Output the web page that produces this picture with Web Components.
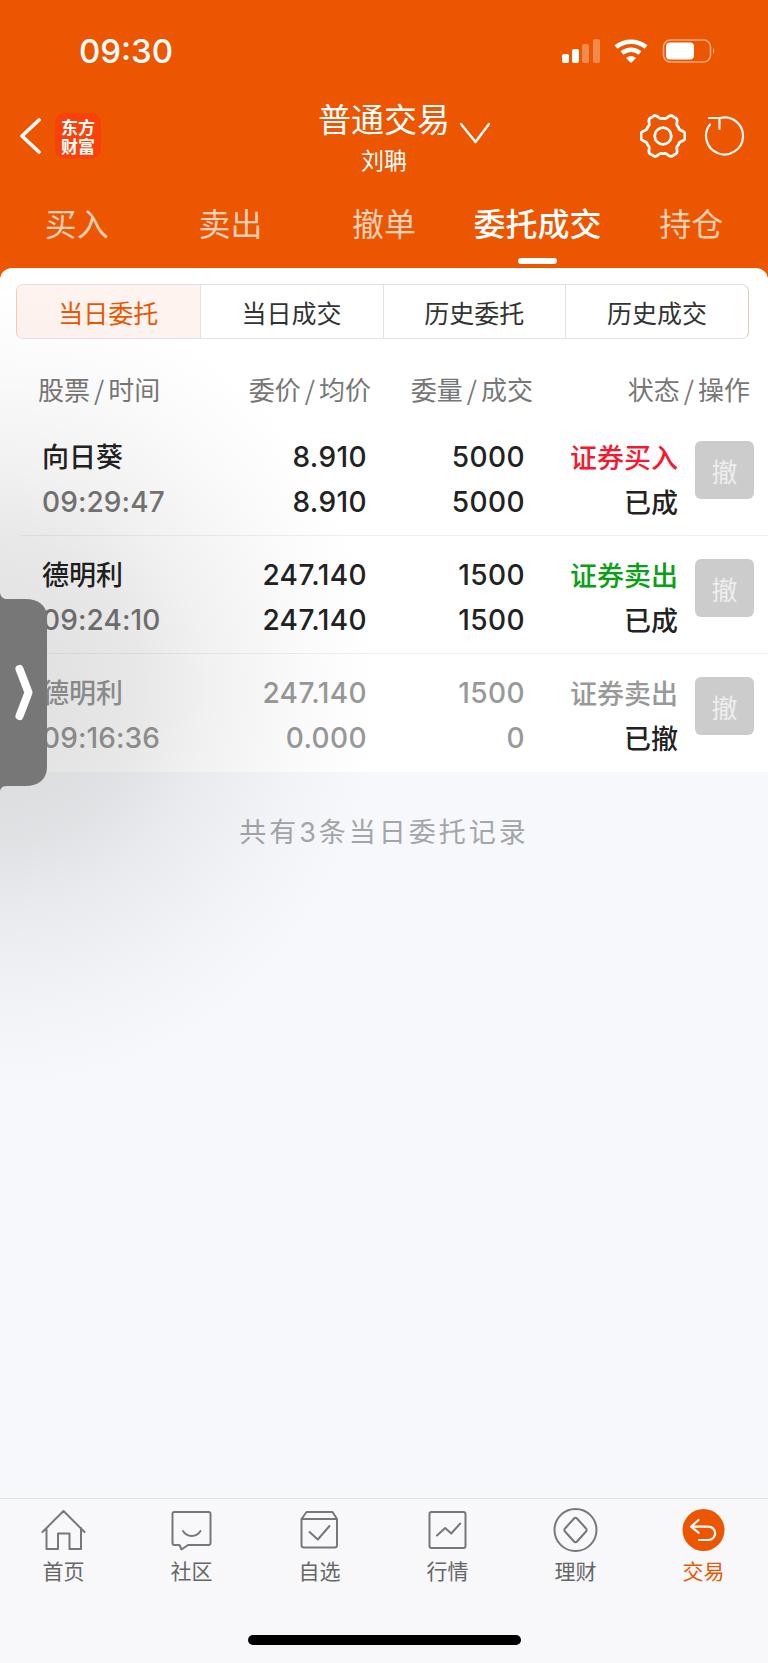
<!DOCTYPE html>
<html lang="zh">
<head>
<meta charset="utf-8">
<title>委托成交</title>
<style>
html, body { margin: 0; padding: 0; background: #f7f8fb; }
body { font-family: "Noto Sans CJK SC", "Noto Sans", sans-serif; }
#page { display: flex; flex-direction: column; width: 768px; height: 1663px; position: relative; overflow: hidden; }
</style>
</head>
<body>
<div id="page">
  <status-bar></status-bar>
  <trade-header title="普通交易" user="刘聃"></trade-header>
  <trade-tabs></trade-tabs>
  <orders-card></orders-card>
  <list-summary>共有3条当日委托记录</list-summary>
  <bottom-nav></bottom-nav>
  <side-handle></side-handle>
</div>

<script>
class StatusBar extends HTMLElement {
    constructor() {
        super();
        this.attachShadow({ mode: 'open' });
        this.shadowRoot.innerHTML = `
            <style>
                :host { display: flex; justify-content: space-between; align-items: center; height: 92px; box-sizing: border-box; background: #ec5600; color: #fff; padding: 10px 0 0 79px; }
                .time { font: 500 33px/1 Inter, "Liberation Sans", sans-serif; }
                svg { display: block; margin-right: 51px; }
            </style>
            <span class="time">09:30</span>
            <svg width="156" height="24" viewBox="0 0 156 24">
                <rect x="1" y="15" width="7" height="9" rx="2" fill="#fff"/>
                <rect x="11" y="10" width="7" height="14" rx="2" fill="#fff"/>
                <rect x="21" y="5" width="7" height="19" rx="2" fill="#fff" fill-opacity=".3"/>
                <rect x="32" y="0" width="7" height="24" rx="2" fill="#fff" fill-opacity=".3"/>
                <path d="M55 8a24 24 0 0 1 30 0" fill="none" stroke="#fff" stroke-width="4.500"/>
                <path d="M61 14a14 14 0 0 1 18 0" fill="none" stroke="#fff" stroke-width="4.500"/>
                <path d="M65 19a8 8 0 0 1 10 0L70 24z" fill="#fff"/>
                <rect x="102.500" y="1" width="47" height="22" rx="7" fill="none" stroke="#fff" stroke-opacity=".5" stroke-width="1.600"/>
                <rect x="105" y="3.500" width="28" height="17" rx="4" fill="#fff"/>
                <path d="M152 9a4 4 0 0 1 0 6z" fill="#fff" fill-opacity=".5"/>
            </svg>
        `;
    }
}

class TradeHeader extends HTMLElement {
    constructor() {
        super();
        this.attachShadow({ mode: 'open' });
        // six flat lobes: left, right and the four corners, notch at top and bottom
        let gear = '';
        for (let i = 0; i < 180; i++) {
            const t = i / 180 * Math.PI * 2;
            const r = 19.8 + 2.6 * (Math.cos(6 * t) - 0.2 * Math.cos(18 * t));
            gear += (i ? 'L' : 'M') + (23 + r * Math.cos(t)).toFixed(2) + ' ' + (23 + r * Math.sin(t)).toFixed(2);
        }
        this.shadowRoot.innerHTML = `
            <style>
                :host { display: grid; grid-template-columns: 1fr auto 1fr; height: 98px; background: #ec5600; color: #fff; }
                .left { display: flex; align-items: center; gap: 13px; padding: 0 0 10px 20px; }
                .logo { display: grid; place-content: center; width: 46px; height: 46px; border-radius: 10px; background: #f9420a; font-size: 17px; line-height: 19px; font-weight: 700; text-align: center; }
                .center { display: grid; justify-items: center; align-content: start; position: relative; padding-top: 4px; }
                .title { font-size: 33px; line-height: 44px; }
                .user { font-size: 23px; line-height: 30px; margin-top: 4px; }
                .drop { position: absolute; left: 141px; top: 30px; }
                .right { display: flex; justify-content: flex-end; align-items: center; gap: 17px; padding: 0 23px 10px 0; }
                svg { display: block; }
            </style>
            <div class="left">
                <svg width="22" height="36" viewBox="0 0 22 36"><path d="M19 2 2 18l17 16" fill="none" stroke="#fff" stroke-width="3.600" stroke-linecap="round" stroke-linejoin="round"/></svg>
                <div class="logo"><span>东方</span><span>财富</span></div>
            </div>
            <div class="center">
                <span class="title"></span>
                <span class="user"></span>
                <svg class="drop" width="32" height="22" viewBox="0 0 32 22"><path d="M2 2l14.500 18L30 2" fill="none" stroke="#fff" stroke-width="2.400" stroke-linecap="round" stroke-linejoin="round"/></svg>
            </div>
            <div class="right">
                <svg width="46" height="46" viewBox="0 0 46 46" fill="none" stroke="#fff" stroke-width="2.800">
                    <path d="${gear}z" stroke-linejoin="round"/>
                    <circle cx="23" cy="23" r="8.300"/>
                </svg>
                <svg width="42" height="42" viewBox="0 0 42 42" fill="none" stroke="#fff" stroke-width="2.200" stroke-opacity=".95" stroke-linecap="round" stroke-linejoin="round">
                    <path d="M7 9.500A18.500 18.500 0 1 0 17 3"/>
                    <path d="M6 3H16.500V14"/>
                </svg>
            </div>
        `;
        this.shadowRoot.querySelector('.title').textContent = this.getAttribute('title');
        this.shadowRoot.querySelector('.user').textContent = this.getAttribute('user');
    }
}

class TradeTabs extends HTMLElement {
    constructor() {
        super();
        this.attachShadow({ mode: 'open' });
        this.shadowRoot.innerHTML = `
            <style>
                :host { display: grid; grid-template-columns: repeat(5, 1fr); height: 78px; background: #ec5600; color: rgba(255,255,255,.72); }
                div { position: relative; text-align: center; font-size: 32px; line-height: 46px; padding-top: 9px; }
                .on { color: #fff; font-weight: 500; }
                .on::after { content: ''; position: absolute; left: 50%; bottom: 4px; width: 39px; height: 6px; margin-left: -20px; border-radius: 3px; background: #fff; }
            </style>
            <div>买入</div><div>卖出</div><div>撤单</div><div class="on">委托成交</div><div>持仓</div>
        `;
    }
}

class OrdersCard extends HTMLElement {
    constructor() {
        super();
        this.attachShadow({ mode: 'open' });
        this.shadowRoot.innerHTML = `
            <style>
                :host { display: block; background: #ec5600; }
                .card { background: #fff; border-radius: 12px 12px 0 0; padding-top: 16px; }
                .seg { display: grid; grid-template-columns: repeat(4, 1fr); height: 55px; margin: 0 19px 0 16px; box-sizing: border-box; border: 1.500px solid #dfe2e8; border-left-color: #f6c9b2; border-right-color: #efc6b1; border-radius: 7px; font-size: 25px; color: #333; overflow: hidden; }
                .seg div { display: grid; place-items: center; border-left: 1.500px solid #dfe2e8; }
                .seg div:first-child { border-left: 0; background: #fef3ef; color: #ec5600; }
                .head { display: grid; grid-template-columns: 161px 172px 162px 217px; height: 79px; align-items: center; padding: 20px 18px 0 38px; box-sizing: border-box; font-size: 26px; color: #777; }
                .head span { text-align: right; white-space: nowrap; }
                .head span:first-child { text-align: left; }
                .head i { font-style: normal; margin: 0 4px; }
            </style>
            <div class="card">
                <div class="seg"><div>当日委托</div><div>当日成交</div><div>历史委托</div><div>历史成交</div></div>
                <div class="head"><span>股票<i>/</i>时间</span><span>委价<i>/</i>均价</span><span>委量<i>/</i>成交</span><span>状态<i>/</i>操作</span></div>
                <order-row name="向日葵" time="09:29:47" price="8.910" avg="8.910" qty="5000" done="5000" side="证券买入" tone="buy" state="已成"></order-row>
                <order-row name="德明利" time="09:24:10" price="247.140" avg="247.140" qty="1500" done="1500" side="证券卖出" tone="sell" state="已成"></order-row>
                <order-row name="德明利" time="09:16:36" price="247.140" avg="0.000" qty="1500" done="0" side="证券卖出" tone="off" state="已撤" last></order-row>
            </div>
        `;
    }
}

class OrderRow extends HTMLElement {
    constructor() {
        super();
        this.attachShadow({ mode: 'open' });
        const a = (n) => this.getAttribute(n);
        this.shadowRoot.innerHTML = `
            <style>
                :host { display: grid; grid-template-columns: 1fr 180px 158px 154px 75px; height: 118px; box-sizing: border-box; margin-left: 20px; padding: 17px 14px 0 22px; border-bottom: 1px solid #f0f0f2; --num: #222; --name: #222; --time: #777; font: 500 28px/45px Inter, "Noto Sans CJK SC", sans-serif; letter-spacing: .4px; }
                :host([last]) { border-bottom: 0; --num: #999; --name: #999; --time: #999; }
                .col { display: flex; flex-direction: column; text-align: right; color: var(--num); white-space: nowrap; }
                .name { color: var(--name); text-align: left; margin-top: -2px; }
                .name b { font: 500 27px/45px "Noto Sans CJK SC", sans-serif; letter-spacing: 0; }
                .name .t { color: var(--time); letter-spacing: .1px; margin-top: 2px; }
                .st { font-family: "Noto Sans CJK SC", sans-serif; font-size: 27px; letter-spacing: 0; margin-top: -1.500px; padding-right: 1px; }
                .buy { color: #f8182e; }
                .sell { color: #0aa016; }
                .off { color: #999; }
                .st b { font-weight: 500; color: #222; }
                button { justify-self: end; width: 59px; height: 58px; margin-top: 6px; padding: 0; border: 0; border-radius: 6px; background: #ccc; color: #eee; font: 400 26px "Noto Sans CJK SC", sans-serif; }
            </style>
            <div class="col name"><b>${a('name')}</b><span class="t">${a('time')}</span></div>
            <div class="col"><span>${a('price')}</span><span>${a('avg')}</span></div>
            <div class="col"><span>${a('qty')}</span><span>${a('done')}</span></div>
            <div class="col st"><span class="${a('tone')}">${a('side')}</span><b>${a('state')}</b></div>
            <button>撤</button>
        `;
    }
}

class ListSummary extends HTMLElement {
    constructor() {
        super();
        this.attachShadow({ mode: 'open' });
        this.shadowRoot.innerHTML = `
            <style>
                :host { display: block; flex: 1; padding-top: 40px; text-align: center; font: 400 27px/42px Inter, "Noto Sans CJK SC", sans-serif; letter-spacing: 3px; color: #a3a5a8; }
            </style>
            <slot></slot>
        `;
    }
}

class BottomNav extends HTMLElement {
    constructor() {
        super();
        this.attachShadow({ mode: 'open' });
        const st = 'fill="none" stroke="#777" stroke-width="2" stroke-linecap="round" stroke-linejoin="round"';
        const items = [
            ['首页', `<path d="M1 24 22 3l21 21M5 20v21h11.500V25.500H28V41h11.500V20" ${st}/>`],
            ['社区', `<path d="M5 4h34a2 2 0 0 1 2 2v29a2 2 0 0 1-2 2H18.500L12 41.500 10 37H5a2 2 0 0 1-2-2V6a2 2 0 0 1 2-2z" ${st}/><path d="M13.500 23c4 6.500 13.500 6.500 17.500 0" ${st}/>`],
            ['自选', `<path d="M9 4h26l4.500 7v26a2.500 2.500 0 0 1-2.500 2.500H6.500A2.500 2.500 0 0 1 4 37V11zM4 11h35.500" ${st}/><path d="M12 24l8.300 7.500L32 18" ${st}/>`],
            ['行情', `<rect x="4" y="4" width="36" height="36" rx="2" ${st}/><path d="M11.500 27.500 19.700 20l6 5.500 9-10" ${st}/>`],
            ['理财', `<circle cx="22" cy="22" r="21" ${st}/><path d="M20.500 10.500a2 2 0 0 1 3 0l9 10a2 2 0 0 1 0 3l-9 10a2 2 0 0 1-3 0l-9-10a2 2 0 0 1 0-3z" ${st}/>`],
            ['交易', `<circle cx="22" cy="22" r="21" fill="#ec5600"/><path d="M17 12l-7.500 6.700 7.500 6M10 18.700h17a6.600 6.600 0 0 1 0 13.300h-9.500" fill="none" stroke="#fff" stroke-width="2.200" stroke-linecap="round" stroke-linejoin="round"/>`]
        ];
        this.shadowRoot.innerHTML = `
            <style>
                :host { display: block; height: 165px; box-sizing: border-box; border-top: 1.500px solid #e3e3e6; background: #f8f8fb; position: relative; }
                nav { display: grid; grid-template-columns: repeat(6, 1fr); padding-top: 9px; }
                a { display: flex; flex-direction: column; align-items: center; font-size: 21px; line-height: 30px; color: #666; transform: translateX(-.5px); }
                a:last-child { color: #ec5600; }
                svg { display: block; margin-bottom: 3px; overflow: visible; }
                .home { width: 273px; height: 10px; margin: 50px auto 0; border-radius: 5px; background: #000; }
            </style>
            <nav>${items.map(i => `<a><svg width="44" height="44" viewBox="0 0 44 44">${i[1]}</svg>${i[0]}</a>`).join('')}</nav>
            <div class="home"></div>
        `;
    }
}

class SideHandle extends HTMLElement {
    constructor() {
        super();
        this.attachShadow({ mode: 'open' });
        this.shadowRoot.innerHTML = `
            <style>
                :host { display: block; position: absolute; left: 0; top: 593px; width: 47px; height: 198px; }
                .glow { position: absolute; left: 0; top: -303px; width: 380px; height: 800px; background: radial-gradient(380px 400px at 0 50%, rgba(0,0,0,.13), rgba(0,0,0,.09) 38%, rgba(0,0,0,.055) 55%, rgba(0,0,0,.02) 80%, rgba(0,0,0,0)); }
                svg { display: block; position: relative; overflow: visible; }
            </style>
            <div class="glow"></div>
            <svg width="47" height="198" viewBox="0 0 47 198">
                <path d="M0 0c1 4 3 6 8 6h17c14 0 22 7 22 18v150c0 12-8 19-22 19H8c-5 0-7 1-8 5z" fill="#777"/>
                <path d="M19.500 76 28.500 99.500 19.500 123" fill="none" stroke="#fff" stroke-width="8" stroke-linecap="round" stroke-linejoin="round"/>
            </svg>
        `;
    }
}

customElements.define('status-bar', StatusBar);
customElements.define('trade-header', TradeHeader);
customElements.define('trade-tabs', TradeTabs);
customElements.define('order-row', OrderRow);
customElements.define('orders-card', OrdersCard);
customElements.define('list-summary', ListSummary);
customElements.define('bottom-nav', BottomNav);
customElements.define('side-handle', SideHandle);
</script>
</body>
</html>
